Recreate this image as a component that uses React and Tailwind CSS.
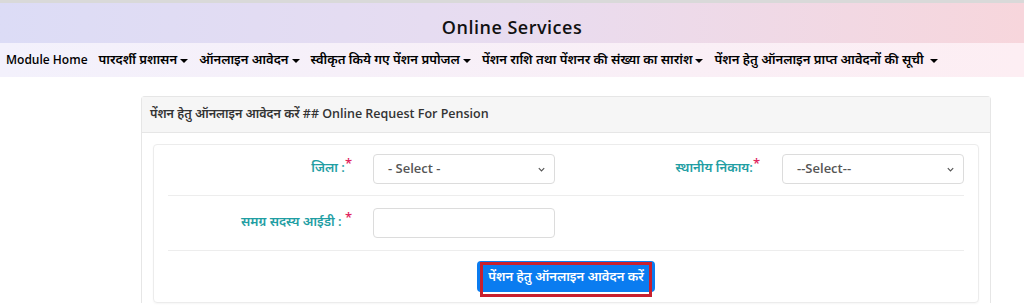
import React from "react";

const navItems = [
  { label: "Module Home" },
  { label: "पारदर्शी प्रशासन", drop: true },
  { label: "ऑनलाइन आवेदन", drop: true },
  { label: "स्वीकृत किये गए पेंशन प्रपोजल", drop: true },
  { label: "पेंशन राशि तथा पेंशनर की संख्या का सारांश", drop: true },
  { label: "पेंशन हेतु ऑनलाइन प्राप्त आवेदनों की सूची ", drop: true },
];

const Caret = () => (
  <span className="ml-[3px] inline-block h-0 w-0 border-x-[4px] border-t-[4px] border-x-transparent border-t-black align-middle" />
);

const Label = ({ text, width }) => (
  <label className={`block shrink-0 pt-[4px] text-right text-[13px] font-semibold text-[#1f9ea3] ${width}`}>
    {text}
    <span className="relative -top-[4px] text-[#e0245e]">*</span>
  </label>
);

const Select = ({ text }) => (
  <div className="flex h-[30px] w-[182px] shrink-0 items-center justify-between rounded-[4px] border border-[#dcdcdc] bg-white pl-[14px] pr-[8px] text-[13px] font-semibold text-[#555]">
    <span>{text}</span>
    <svg width="9" height="9" viewBox="0 0 10 10">
      <path d="M2 3.5 L5 6.5 L8 3.5" fill="none" stroke="#555" strokeWidth="1.3" />
    </svg>
  </div>
);

export default function App() {
  return (
    <div className="h-[308px] w-[1024px] overflow-hidden bg-white font-['Open_Sans','Noto_Sans',sans-serif] text-black">
      <div className="h-[3px] bg-[#d9d9d9]" />
      <header className="flex h-[40px] items-center justify-center bg-gradient-to-r from-[#dcdcf6] via-[#e8dcf0] to-[#f7d6dc] pt-[8px]">
        <h1 className="text-[18px] font-semibold tracking-[0.5px] text-[#111]">Online Services</h1>
      </header>
      <nav className="flex h-[34px] items-center gap-[11px] bg-gradient-to-r from-[#f3f1fc] to-[#fdeef3] pl-[6px] text-[13px] font-semibold">
        {navItems.map((n) => (
          <span key={n.label} className={n.drop ? "whitespace-nowrap" : "whitespace-nowrap text-[12px]"}>
            {n.label}
            {n.drop && <Caret />}
          </span>
        ))}
      </nav>

      <div className="ml-[141px] mt-[19px] w-[850px] rounded-t-[4px] border border-b-0 border-[#e6e6e6]">
        <div className="flex h-[36px] items-center border-b border-[#e6e6e6] bg-[#f6f6f6] px-[8px] text-[12.5px] font-semibold text-[#333]">
          पेंशन हेतु ऑनलाइन आवेदन करें ## Online Request For Pension
        </div>
        <div className="px-[11px] pt-[11px]">
          <div className="rounded-[4px] border border-[#ececec] px-[14px] pb-[10px] shadow-[0_1px_2px_rgba(0,0,0,0.04)]">
            <div className="flex items-start pt-[9px] pb-[11px]">
              <Label text="जिला :" width="w-[205px] pr-[21px]" />
              <Select text="- Select -" />
              <Label text="स्थानीय निकाय:" width="w-[227px] pr-[22px]" />
              <Select text="--Select--" />
            </div>
            <div className="border-t border-[#ededed]" />
            <div className="flex items-start pt-[12px] pb-[12px]">
              <Label text="समग्र सदस्य आईडी : " width="w-[205px] pr-[21px]" />
              <div className="h-[30px] w-[182px] rounded-[4px] border border-[#dcdcdc] bg-white" />
            </div>
            <div className="border-t border-[#ededed]" />
            <div className="flex justify-center pt-[10px]">
              <button className="relative h-[31px] rounded-[4px] bg-[#0a7cf0] px-[11px] text-[13px] font-semibold text-white">
                <span className="absolute -bottom-[5px] left-[3px] right-[3px] top-[1px] border-[3px] border-[#c8202f]" />
                पेंशन हेतु ऑनलाइन आवेदन करें
              </button>
            </div>
          </div>
        </div>
      </div>
    </div>
  );
}
